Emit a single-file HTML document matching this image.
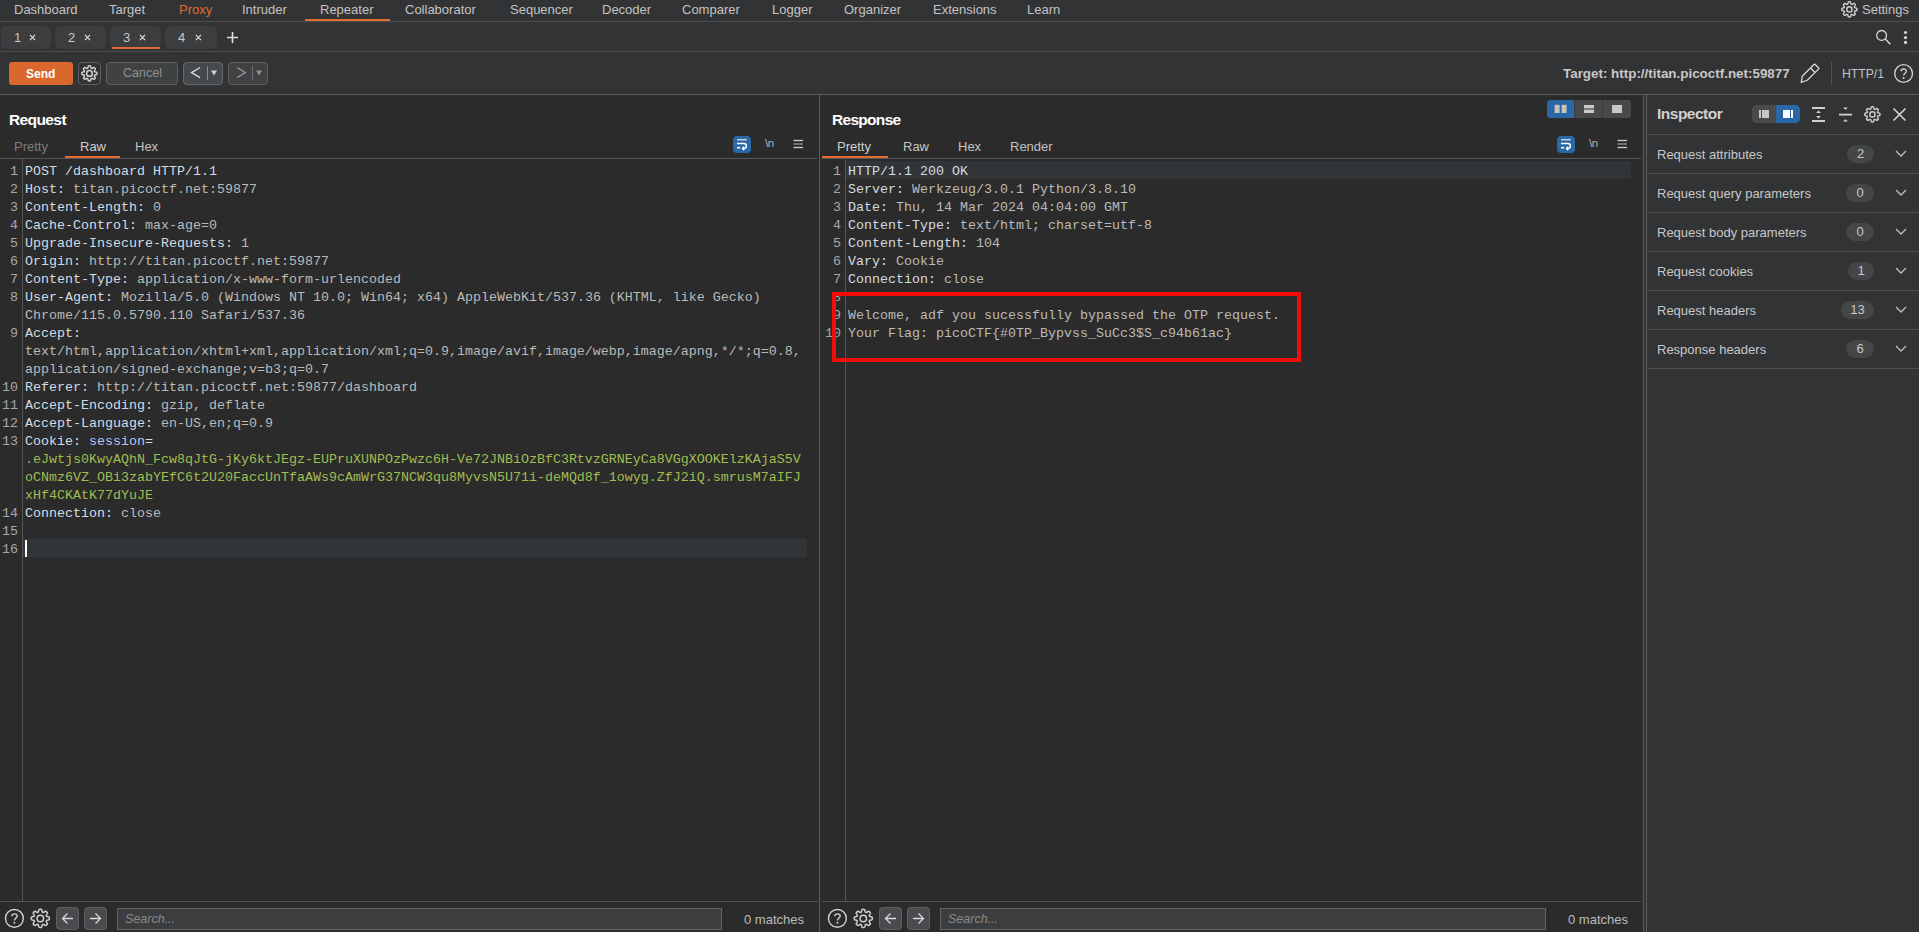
<!DOCTYPE html><html><head><meta charset="utf-8"><style>
html,body{margin:0;padding:0;}
body{width:1919px;height:932px;overflow:hidden;position:relative;background:#323335;font-family:"Liberation Sans",sans-serif;}
.a{position:absolute;}
.t{white-space:pre;}
svg{position:absolute;overflow:visible;}
</style></head><body>

<div class="a" style="left:0px;top:21px;width:1919px;height:1px;background:#4d4e50;"></div>
<div class="a t" style="left:14px;top:3px;font-size:13px;line-height:13px;color:#c3c3c3;font-weight:normal;font-family:'Liberation Sans', sans-serif;">Dashboard</div>
<div class="a t" style="left:109px;top:3px;font-size:13px;line-height:13px;color:#c3c3c3;font-weight:normal;font-family:'Liberation Sans', sans-serif;">Target</div>
<div class="a t" style="left:179px;top:3px;font-size:13px;line-height:13px;color:#e36a30;font-weight:normal;font-family:'Liberation Sans', sans-serif;">Proxy</div>
<div class="a t" style="left:242px;top:3px;font-size:13px;line-height:13px;color:#c3c3c3;font-weight:normal;font-family:'Liberation Sans', sans-serif;">Intruder</div>
<div class="a t" style="left:320px;top:3px;font-size:13px;line-height:13px;color:#c3c3c3;font-weight:normal;font-family:'Liberation Sans', sans-serif;">Repeater</div>
<div class="a t" style="left:405px;top:3px;font-size:13px;line-height:13px;color:#c3c3c3;font-weight:normal;font-family:'Liberation Sans', sans-serif;">Collaborator</div>
<div class="a t" style="left:510px;top:3px;font-size:13px;line-height:13px;color:#c3c3c3;font-weight:normal;font-family:'Liberation Sans', sans-serif;">Sequencer</div>
<div class="a t" style="left:602px;top:3px;font-size:13px;line-height:13px;color:#c3c3c3;font-weight:normal;font-family:'Liberation Sans', sans-serif;">Decoder</div>
<div class="a t" style="left:682px;top:3px;font-size:13px;line-height:13px;color:#c3c3c3;font-weight:normal;font-family:'Liberation Sans', sans-serif;">Comparer</div>
<div class="a t" style="left:772px;top:3px;font-size:13px;line-height:13px;color:#c3c3c3;font-weight:normal;font-family:'Liberation Sans', sans-serif;">Logger</div>
<div class="a t" style="left:844px;top:3px;font-size:13px;line-height:13px;color:#c3c3c3;font-weight:normal;font-family:'Liberation Sans', sans-serif;">Organizer</div>
<div class="a t" style="left:933px;top:3px;font-size:13px;line-height:13px;color:#c3c3c3;font-weight:normal;font-family:'Liberation Sans', sans-serif;">Extensions</div>
<div class="a t" style="left:1027px;top:3px;font-size:13px;line-height:13px;color:#c3c3c3;font-weight:normal;font-family:'Liberation Sans', sans-serif;">Learn</div>
<div class="a" style="left:305px;top:19px;width:85px;height:2px;background:#e36a30;"></div>
<div class="a t" style="left:1862px;top:3px;font-size:13px;line-height:13px;color:#c3c3c3;font-weight:normal;font-family:'Liberation Sans', sans-serif;">Settings</div>
<div class="a" style="left:0px;top:51px;width:1919px;height:1px;background:#4d4e50;"></div>
<div class="a" style="left:1px;top:26px;width:50px;height:23px;background:#3c3d3e;border-radius:5px;"></div>
<div class="a t" style="left:14px;top:31px;font-size:13px;line-height:13px;color:#c8c8c8;font-weight:normal;font-family:'Liberation Sans', sans-serif;">1</div>
<div class="a" style="left:55px;top:26px;width:51px;height:23px;background:#3c3d3e;border-radius:5px;"></div>
<div class="a t" style="left:68px;top:31px;font-size:13px;line-height:13px;color:#c8c8c8;font-weight:normal;font-family:'Liberation Sans', sans-serif;">2</div>
<div class="a" style="left:110px;top:26px;width:51px;height:23px;background:#3c3d3e;border-radius:5px;"></div>
<div class="a t" style="left:123px;top:31px;font-size:13px;line-height:13px;color:#c8c8c8;font-weight:normal;font-family:'Liberation Sans', sans-serif;">3</div>
<div class="a" style="left:165px;top:26px;width:52px;height:23px;background:#3c3d3e;border-radius:5px;"></div>
<div class="a t" style="left:178px;top:31px;font-size:13px;line-height:13px;color:#c8c8c8;font-weight:normal;font-family:'Liberation Sans', sans-serif;">4</div>
<div class="a" style="left:112px;top:47px;width:48px;height:2px;background:#e36a30;border-radius:0 0 1px 1px;"></div>
<div class="a" style="left:0px;top:94px;width:1919px;height:1px;background:#5c5c5c;"></div>
<div class="a" style="left:9px;top:62px;width:64px;height:23px;background:#d9672e;border-radius:3px;"></div>
<div class="a t" style="left:26px;top:68px;font-size:12px;line-height:12px;color:#ffffff;font-weight:bold;font-family:'Liberation Sans', sans-serif;">Send</div>
<div class="a" style="left:78px;top:62px;width:23px;height:23px;border:1px solid #5e5e5e;border-radius:4px;box-sizing:border-box;"></div>
<div class="a" style="left:106px;top:62px;width:72px;height:23px;background:#3f4143;border:1px solid #606060;border-radius:4px;box-sizing:border-box;"></div>
<div class="a t" style="left:123px;top:67px;font-size:12.5px;line-height:12.5px;color:#8e9193;font-weight:normal;font-family:'Liberation Sans', sans-serif;">Cancel</div>
<div class="a" style="left:183px;top:62px;width:40px;height:23px;background:#46494c;border:1px solid #676767;border-radius:4px;box-sizing:border-box;"></div>
<div class="a" style="left:228px;top:62px;width:40px;height:23px;background:#3f4143;border:1px solid #606060;border-radius:4px;box-sizing:border-box;"></div>
<div class="a t" style="left:1563px;top:67px;font-size:13.4px;line-height:13.4px;color:#c8c8c8;font-weight:bold;font-family:'Liberation Sans', sans-serif;">Target: http://titan.picoctf.net:59877</div>
<div class="a" style="left:1831px;top:62px;width:1px;height:23px;background:#505356;"></div>
<div class="a t" style="left:1842px;top:68px;font-size:12.2px;line-height:12.2px;color:#c3c3c3;font-weight:normal;font-family:'Liberation Sans', sans-serif;">HTTP/1</div>
<div class="a" style="left:0px;top:95px;width:819px;height:837px;background:#2b2b2b;"></div>
<div class="a" style="left:819px;top:95px;width:1px;height:837px;background:#5c5c5c;"></div>
<div class="a" style="left:820px;top:95px;width:823px;height:837px;background:#2b2b2b;"></div>
<div class="a" style="left:1643px;top:95px;width:1px;height:837px;background:#5c5c5c;"></div>
<div class="a" style="left:1646px;top:95px;width:1px;height:837px;background:#5c5c5c;"></div>
<div class="a t" style="left:9px;top:112px;font-size:15.5px;line-height:15.5px;color:#ffffff;font-weight:bold;font-family:'Liberation Sans', sans-serif;letter-spacing:-0.6px;">Request</div>
<div class="a t" style="left:14px;top:140px;font-size:13px;line-height:13px;color:#7d7d7d;font-weight:normal;font-family:'Liberation Sans', sans-serif;">Pretty</div>
<div class="a t" style="left:80px;top:140px;font-size:13px;line-height:13px;color:#d0d0d0;font-weight:normal;font-family:'Liberation Sans', sans-serif;">Raw</div>
<div class="a t" style="left:135px;top:140px;font-size:13px;line-height:13px;color:#c3c3c3;font-weight:normal;font-family:'Liberation Sans', sans-serif;">Hex</div>
<div class="a" style="left:65px;top:156px;width:55px;height:2px;background:#e36a30;"></div>
<div class="a" style="left:0px;top:158px;width:817px;height:1px;background:#555555;"></div>
<div class="a" style="left:22px;top:159px;width:1px;height:742px;background:#555555;"></div>
<div class="a t" style="left:832px;top:112px;font-size:15.5px;line-height:15.5px;color:#ffffff;font-weight:bold;font-family:'Liberation Sans', sans-serif;letter-spacing:-0.7px;">Response</div>
<div class="a t" style="left:837px;top:140px;font-size:13px;line-height:13px;color:#d0d0d0;font-weight:normal;font-family:'Liberation Sans', sans-serif;">Pretty</div>
<div class="a t" style="left:903px;top:140px;font-size:13px;line-height:13px;color:#c3c3c3;font-weight:normal;font-family:'Liberation Sans', sans-serif;">Raw</div>
<div class="a t" style="left:958px;top:140px;font-size:13px;line-height:13px;color:#c3c3c3;font-weight:normal;font-family:'Liberation Sans', sans-serif;">Hex</div>
<div class="a t" style="left:1010px;top:140px;font-size:13px;line-height:13px;color:#c3c3c3;font-weight:normal;font-family:'Liberation Sans', sans-serif;">Render</div>
<div class="a" style="left:822px;top:156px;width:66px;height:2px;background:#e36a30;"></div>
<div class="a" style="left:822px;top:158px;width:819px;height:1px;background:#555555;"></div>
<div class="a" style="left:845px;top:159px;width:1px;height:742px;background:#555555;"></div>
<div class="a" style="left:0px;top:901px;width:817px;height:1px;background:#555555;"></div>
<div class="a" style="left:822px;top:901px;width:819px;height:1px;background:#555555;"></div>
<div class="a" style="left:117px;top:908px;width:605px;height:22px;background:#3c3d3f;border:1px solid #646464;box-sizing:border-box;"></div>
<div class="a t" style="left:125px;top:913px;font-size:12.5px;line-height:12.5px;color:#8a8a8a;font-weight:normal;font-family:'Liberation Sans', sans-serif;font-style:italic;">Search...</div>
<div class="a t" style="left:744px;top:913px;font-size:13px;line-height:13px;color:#bdbdbd;font-weight:normal;font-family:'Liberation Sans', sans-serif;">0 matches</div>
<div class="a" style="left:940px;top:908px;width:606px;height:22px;background:#3c3d3f;border:1px solid #646464;box-sizing:border-box;"></div>
<div class="a t" style="left:948px;top:913px;font-size:12.5px;line-height:12.5px;color:#8a8a8a;font-weight:normal;font-family:'Liberation Sans', sans-serif;font-style:italic;">Search...</div>
<div class="a t" style="left:1568px;top:913px;font-size:13px;line-height:13px;color:#bdbdbd;font-weight:normal;font-family:'Liberation Sans', sans-serif;">0 matches</div>
<div class="a" style="left:56px;top:907px;width:23px;height:23px;background:#45494c;border-radius:4px;"></div>
<div class="a" style="left:84px;top:907px;width:23px;height:23px;background:#45494c;border-radius:4px;"></div>
<div class="a" style="left:879px;top:907px;width:23px;height:23px;background:#45494c;border-radius:4px;"></div>
<div class="a" style="left:907px;top:907px;width:23px;height:23px;background:#45494c;border-radius:4px;"></div>
<div class="a" style="left:1647px;top:95px;width:272px;height:837px;background:#323335;"></div>
<div class="a t" style="left:1657px;top:106px;font-size:15.5px;line-height:15.5px;color:#d0d0d0;font-weight:bold;font-family:'Liberation Sans', sans-serif;letter-spacing:-0.5px;">Inspector</div>
<div class="a" style="left:1647px;top:134px;width:272px;height:1px;background:#4d4e50;"></div>
<div class="a t" style="left:1657px;top:148px;font-size:13px;line-height:13px;color:#c8c8c8;font-weight:normal;font-family:'Liberation Sans', sans-serif;">Request attributes</div>
<div class="a" style="left:1847px;top:145px;width:27px;height:18px;background:#454647;border-radius:9px;"></div>
<div class="a t" style="left:1847px;top:147px;font-size:13px;line-height:13px;color:#c8c8c8;font-weight:normal;font-family:'Liberation Sans', sans-serif;width:27px;text-align:center;">2</div>
<div class="a" style="left:1647px;top:173px;width:272px;height:1px;background:#4d4e50;"></div>
<div class="a t" style="left:1657px;top:187px;font-size:13px;line-height:13px;color:#c8c8c8;font-weight:normal;font-family:'Liberation Sans', sans-serif;">Request query parameters</div>
<div class="a" style="left:1846px;top:184px;width:28px;height:18px;background:#454647;border-radius:9px;"></div>
<div class="a t" style="left:1846px;top:186px;font-size:13px;line-height:13px;color:#c8c8c8;font-weight:normal;font-family:'Liberation Sans', sans-serif;width:28px;text-align:center;">0</div>
<div class="a" style="left:1647px;top:212px;width:272px;height:1px;background:#4d4e50;"></div>
<div class="a t" style="left:1657px;top:226px;font-size:13px;line-height:13px;color:#c8c8c8;font-weight:normal;font-family:'Liberation Sans', sans-serif;">Request body parameters</div>
<div class="a" style="left:1846px;top:223px;width:28px;height:18px;background:#454647;border-radius:9px;"></div>
<div class="a t" style="left:1846px;top:225px;font-size:13px;line-height:13px;color:#c8c8c8;font-weight:normal;font-family:'Liberation Sans', sans-serif;width:28px;text-align:center;">0</div>
<div class="a" style="left:1647px;top:251px;width:272px;height:1px;background:#4d4e50;"></div>
<div class="a t" style="left:1657px;top:265px;font-size:13px;line-height:13px;color:#c8c8c8;font-weight:normal;font-family:'Liberation Sans', sans-serif;">Request cookies</div>
<div class="a" style="left:1848px;top:262px;width:26px;height:18px;background:#454647;border-radius:9px;"></div>
<div class="a t" style="left:1848px;top:264px;font-size:13px;line-height:13px;color:#c8c8c8;font-weight:normal;font-family:'Liberation Sans', sans-serif;width:26px;text-align:center;">1</div>
<div class="a" style="left:1647px;top:290px;width:272px;height:1px;background:#4d4e50;"></div>
<div class="a t" style="left:1657px;top:304px;font-size:13px;line-height:13px;color:#c8c8c8;font-weight:normal;font-family:'Liberation Sans', sans-serif;">Request headers</div>
<div class="a" style="left:1841px;top:301px;width:33px;height:18px;background:#454647;border-radius:9px;"></div>
<div class="a t" style="left:1841px;top:303px;font-size:13px;line-height:13px;color:#c8c8c8;font-weight:normal;font-family:'Liberation Sans', sans-serif;width:33px;text-align:center;">13</div>
<div class="a" style="left:1647px;top:329px;width:272px;height:1px;background:#4d4e50;"></div>
<div class="a t" style="left:1657px;top:343px;font-size:13px;line-height:13px;color:#c8c8c8;font-weight:normal;font-family:'Liberation Sans', sans-serif;">Response headers</div>
<div class="a" style="left:1846px;top:340px;width:28px;height:18px;background:#454647;border-radius:9px;"></div>
<div class="a t" style="left:1846px;top:342px;font-size:13px;line-height:13px;color:#c8c8c8;font-weight:normal;font-family:'Liberation Sans', sans-serif;width:28px;text-align:center;">6</div>
<div class="a" style="left:1647px;top:368px;width:272px;height:1px;background:#4d4e50;"></div>
<div class="a" style="left:23px;top:539px;width:784px;height:18px;background:#323538;"></div>
<div class="a" style="left:846px;top:161px;width:785px;height:18px;background:#323538;"></div>
<div class="a" style="left:25px;top:540px;width:2px;height:17px;background:#ffffff;"></div>
<div class="a t" style="left:0px;width:18px;top:163px;text-align:right;font:13.33px/18px 'Liberation Mono',monospace;color:#a8a8a8">1
2
3
4
5
6
7
8

9


10
11
12
13



14
15
16</div>
<div class="a t" style="left:25px;top:163px;font:13.33px/18px 'Liberation Mono',monospace;"><span style="color:#d2dce5">POST /dashboard HTTP/1.1</span>
<span style="color:#d2dce5">Host:</span><span style="color:#bababa"> titan.picoctf.net:59877</span>
<span style="color:#d2dce5">Content-Length:</span><span style="color:#bababa"> 0</span>
<span style="color:#d2dce5">Cache-Control:</span><span style="color:#bababa"> max-age=0</span>
<span style="color:#d2dce5">Upgrade-Insecure-Requests:</span><span style="color:#bababa"> 1</span>
<span style="color:#d2dce5">Origin:</span><span style="color:#bababa"> http://titan.picoctf.net:59877</span>
<span style="color:#d2dce5">Content-Type:</span><span style="color:#bababa"> application/x-www-form-urlencoded</span>
<span style="color:#d2dce5">User-Agent:</span><span style="color:#bababa"> Mozilla/5.0 (Windows NT 10.0; Win64; x64) AppleWebKit/537.36 (KHTML, like Gecko)</span>
<span style="color:#bababa">Chrome/115.0.5790.110 Safari/537.36</span>
<span style="color:#d2dce5">Accept:</span>
<span style="color:#bababa">text/html,application/xhtml+xml,application/xml;q=0.9,image/avif,image/webp,image/apng,*/*;q=0.8,</span>
<span style="color:#bababa">application/signed-exchange;v=b3;q=0.7</span>
<span style="color:#d2dce5">Referer:</span><span style="color:#bababa"> http://titan.picoctf.net:59877/dashboard</span>
<span style="color:#d2dce5">Accept-Encoding:</span><span style="color:#bababa"> gzip, deflate</span>
<span style="color:#d2dce5">Accept-Language:</span><span style="color:#bababa"> en-US,en;q=0.9</span>
<span style="color:#d2dce5">Cookie:</span><span style="color:#b9c3f2"> session</span><span style="color:#d2dce5">=</span>
<span style="color:#a0bd52">.eJwtjs0KwyAQhN_Fcw8qJtG-jKy6ktJEgz-EUPruXUNPOzPwzc6H-Ve72JNBiOzBfC3RtvzGRNEyCa8VGgXOOKElzKAjaS5V</span>
<span style="color:#a0bd52">oCNmz6VZ_OBi3zabYEfC6t2U20FaccUnTfaAWs9cAmWrG37NCW3qu8MyvsN5U71i-deMQd8f_1owyg.ZfJ2iQ.smrusM7aIFJ</span>
<span style="color:#a0bd52">xHf4CKAtK77dYuJE</span>
<span style="color:#d2dce5">Connection:</span><span style="color:#bababa"> close</span>

</div>
<div class="a t" style="left:0px;width:841px;top:163px;text-align:right;font:13.33px/18px 'Liberation Mono',monospace;color:#a8a8a8">1
2
3
4
5
6
7
8
9
10</div>
<div class="a t" style="left:848px;top:163px;font:13.33px/18px 'Liberation Mono',monospace;"><span style="color:#d2dce5">HTTP/1.1 200 OK</span>
<span style="color:#d2dce5">Server:</span><span style="color:#bababa"> Werkzeug/3.0.1 Python/3.8.10</span>
<span style="color:#d2dce5">Date:</span><span style="color:#bababa"> Thu, 14 Mar 2024 04:04:00 GMT</span>
<span style="color:#d2dce5">Content-Type:</span><span style="color:#bababa"> text/html; charset=utf-8</span>
<span style="color:#d2dce5">Content-Length:</span><span style="color:#bababa"> 104</span>
<span style="color:#d2dce5">Vary:</span><span style="color:#bababa"> Cookie</span>
<span style="color:#d2dce5">Connection:</span><span style="color:#bababa"> close</span>

<span style="color:#bababa">Welcome, adf you sucessfully bypassed the OTP request.</span>
<span style="color:#bababa">Your Flag: picoCTF{#0TP_Bypvss_SuCc3$S_c94b61ac}</span></div>
<div class="a" style="left:832px;top:292px;width:469px;height:70px;border:4px solid #f20d0d;box-sizing:border-box;"></div>
<svg style="left:1839px;top:0px" width="20" height="20" viewBox="0 0 20 20"><path d="M18.00,9.40 L18.00,9.27 L18.00,9.13 L17.99,9.00 L17.98,8.87 L17.95,8.74 L17.91,8.61 L17.84,8.49 L17.74,8.37 L17.60,8.26 L17.41,8.16 L17.16,8.09 L16.87,8.02 L16.57,7.98 L16.30,7.93 L16.08,7.88 L15.92,7.82 L15.79,7.75 L15.70,7.68 L15.63,7.60 L15.57,7.52 L15.53,7.43 L15.48,7.35 L15.45,7.26 L15.42,7.17 L15.39,7.07 L15.37,6.97 L15.37,6.87 L15.38,6.75 L15.42,6.62 L15.50,6.46 L15.61,6.27 L15.77,6.04 L15.95,5.80 L16.11,5.55 L16.23,5.32 L16.30,5.11 L16.32,4.94 L16.31,4.78 L16.27,4.65 L16.21,4.53 L16.14,4.41 L16.05,4.31 L15.96,4.22 L15.87,4.12 L15.77,4.03 L15.68,3.93 L15.58,3.84 L15.49,3.75 L15.39,3.66 L15.27,3.59 L15.15,3.53 L15.02,3.49 L14.86,3.48 L14.69,3.50 L14.48,3.57 L14.25,3.69 L14.00,3.85 L13.76,4.03 L13.53,4.19 L13.34,4.30 L13.18,4.38 L13.05,4.42 L12.93,4.43 L12.83,4.43 L12.73,4.41 L12.63,4.38 L12.54,4.35 L12.45,4.32 L12.37,4.27 L12.28,4.23 L12.20,4.17 L12.12,4.10 L12.05,4.01 L11.98,3.88 L11.92,3.72 L11.87,3.50 L11.82,3.23 L11.78,2.93 L11.71,2.64 L11.64,2.39 L11.54,2.20 L11.43,2.06 L11.31,1.96 L11.19,1.89 L11.06,1.85 L10.93,1.82 L10.80,1.81 L10.67,1.80 L10.53,1.80 L10.40,1.80 L10.27,1.80 L10.13,1.80 L10.00,1.81 L9.87,1.82 L9.74,1.85 L9.61,1.89 L9.49,1.96 L9.37,2.06 L9.26,2.20 L9.16,2.39 L9.09,2.64 L9.02,2.93 L8.98,3.23 L8.93,3.50 L8.88,3.72 L8.82,3.88 L8.75,4.01 L8.68,4.10 L8.60,4.17 L8.52,4.23 L8.43,4.27 L8.35,4.32 L8.26,4.35 L8.17,4.38 L8.07,4.41 L7.97,4.43 L7.87,4.43 L7.75,4.42 L7.62,4.38 L7.46,4.30 L7.27,4.19 L7.04,4.03 L6.80,3.85 L6.55,3.69 L6.32,3.57 L6.11,3.50 L5.94,3.48 L5.78,3.49 L5.65,3.53 L5.53,3.59 L5.41,3.66 L5.31,3.75 L5.22,3.84 L5.12,3.93 L5.03,4.03 L4.93,4.12 L4.84,4.22 L4.75,4.31 L4.66,4.41 L4.59,4.53 L4.53,4.65 L4.49,4.78 L4.48,4.94 L4.50,5.11 L4.57,5.32 L4.69,5.55 L4.85,5.80 L5.03,6.04 L5.19,6.27 L5.30,6.46 L5.38,6.62 L5.42,6.75 L5.43,6.87 L5.43,6.97 L5.41,7.07 L5.38,7.17 L5.35,7.26 L5.32,7.35 L5.27,7.43 L5.23,7.52 L5.17,7.60 L5.10,7.68 L5.01,7.75 L4.88,7.82 L4.72,7.88 L4.50,7.93 L4.23,7.98 L3.93,8.02 L3.64,8.09 L3.39,8.16 L3.20,8.26 L3.06,8.37 L2.96,8.49 L2.89,8.61 L2.85,8.74 L2.82,8.87 L2.81,9.00 L2.80,9.13 L2.80,9.27 L2.80,9.40 L2.80,9.53 L2.80,9.67 L2.81,9.80 L2.82,9.93 L2.85,10.06 L2.89,10.19 L2.96,10.31 L3.06,10.43 L3.20,10.54 L3.39,10.64 L3.64,10.71 L3.93,10.78 L4.23,10.82 L4.50,10.87 L4.72,10.92 L4.88,10.98 L5.01,11.05 L5.10,11.12 L5.17,11.20 L5.23,11.28 L5.27,11.37 L5.32,11.45 L5.35,11.54 L5.38,11.63 L5.41,11.73 L5.43,11.83 L5.43,11.93 L5.42,12.05 L5.38,12.18 L5.30,12.34 L5.19,12.53 L5.03,12.76 L4.85,13.00 L4.69,13.25 L4.57,13.48 L4.50,13.69 L4.48,13.86 L4.49,14.02 L4.53,14.15 L4.59,14.27 L4.66,14.39 L4.75,14.49 L4.84,14.58 L4.93,14.68 L5.03,14.77 L5.12,14.87 L5.22,14.96 L5.31,15.05 L5.41,15.14 L5.53,15.21 L5.65,15.27 L5.78,15.31 L5.94,15.32 L6.11,15.30 L6.32,15.23 L6.55,15.11 L6.80,14.95 L7.04,14.77 L7.27,14.61 L7.46,14.50 L7.62,14.42 L7.75,14.38 L7.87,14.37 L7.97,14.37 L8.07,14.39 L8.17,14.42 L8.26,14.45 L8.35,14.48 L8.43,14.53 L8.52,14.57 L8.60,14.63 L8.68,14.70 L8.75,14.79 L8.82,14.92 L8.88,15.08 L8.93,15.30 L8.98,15.57 L9.02,15.87 L9.09,16.16 L9.16,16.41 L9.26,16.60 L9.37,16.74 L9.49,16.84 L9.61,16.91 L9.74,16.95 L9.87,16.98 L10.00,16.99 L10.13,17.00 L10.27,17.00 L10.40,17.00 L10.53,17.00 L10.67,17.00 L10.80,16.99 L10.93,16.98 L11.06,16.95 L11.19,16.91 L11.31,16.84 L11.43,16.74 L11.54,16.60 L11.64,16.41 L11.71,16.16 L11.78,15.87 L11.82,15.57 L11.87,15.30 L11.92,15.08 L11.98,14.92 L12.05,14.79 L12.12,14.70 L12.20,14.63 L12.28,14.57 L12.37,14.53 L12.45,14.48 L12.54,14.45 L12.63,14.42 L12.73,14.39 L12.83,14.37 L12.93,14.37 L13.05,14.38 L13.18,14.42 L13.34,14.50 L13.53,14.61 L13.76,14.77 L14.00,14.95 L14.25,15.11 L14.48,15.23 L14.69,15.30 L14.86,15.32 L15.02,15.31 L15.15,15.27 L15.27,15.21 L15.39,15.14 L15.49,15.05 L15.58,14.96 L15.68,14.87 L15.77,14.77 L15.87,14.68 L15.96,14.58 L16.05,14.49 L16.14,14.39 L16.21,14.27 L16.27,14.15 L16.31,14.02 L16.32,13.86 L16.30,13.69 L16.23,13.48 L16.11,13.25 L15.95,13.00 L15.77,12.76 L15.61,12.53 L15.50,12.34 L15.42,12.18 L15.38,12.05 L15.37,11.93 L15.37,11.83 L15.39,11.73 L15.42,11.63 L15.45,11.54 L15.48,11.45 L15.53,11.37 L15.57,11.28 L15.63,11.20 L15.70,11.12 L15.79,11.05 L15.92,10.98 L16.08,10.92 L16.30,10.87 L16.57,10.82 L16.87,10.78 L17.16,10.71 L17.41,10.64 L17.60,10.54 L17.74,10.43 L17.84,10.31 L17.91,10.19 L17.95,10.06 L17.98,9.93 L17.99,9.80 L18.00,9.67 L18.00,9.53Z" fill="none" stroke="#d0d0d0" stroke-width="1.4" stroke-linejoin="round"/><circle cx="10.40" cy="9.40" r="2.60" fill="none" stroke="#d0d0d0" stroke-width="1.4"/></svg>
<svg style="left:79px;top:63px" width="20" height="20" viewBox="0 0 20 20"><path d="M17.95,10.40 L17.95,10.27 L17.95,10.14 L17.94,10.00 L17.93,9.87 L17.90,9.74 L17.86,9.62 L17.79,9.49 L17.69,9.37 L17.55,9.27 L17.36,9.17 L17.11,9.10 L16.82,9.04 L16.52,8.99 L16.25,8.94 L16.04,8.89 L15.87,8.83 L15.75,8.77 L15.66,8.69 L15.58,8.61 L15.53,8.53 L15.48,8.45 L15.44,8.36 L15.40,8.28 L15.37,8.19 L15.35,8.09 L15.33,8.00 L15.32,7.89 L15.34,7.77 L15.38,7.64 L15.45,7.48 L15.57,7.29 L15.73,7.07 L15.91,6.82 L16.07,6.58 L16.19,6.35 L16.26,6.14 L16.28,5.97 L16.27,5.82 L16.23,5.68 L16.17,5.56 L16.10,5.45 L16.01,5.35 L15.92,5.25 L15.83,5.16 L15.74,5.06 L15.64,4.97 L15.55,4.88 L15.45,4.79 L15.35,4.70 L15.24,4.63 L15.12,4.57 L14.98,4.53 L14.83,4.52 L14.66,4.54 L14.45,4.61 L14.22,4.73 L13.98,4.89 L13.73,5.07 L13.51,5.23 L13.32,5.35 L13.16,5.42 L13.03,5.46 L12.91,5.48 L12.80,5.47 L12.71,5.45 L12.61,5.43 L12.52,5.40 L12.44,5.36 L12.35,5.32 L12.27,5.27 L12.19,5.22 L12.11,5.14 L12.03,5.05 L11.97,4.93 L11.91,4.76 L11.86,4.55 L11.81,4.28 L11.76,3.98 L11.70,3.69 L11.63,3.44 L11.53,3.25 L11.43,3.11 L11.31,3.01 L11.18,2.94 L11.06,2.90 L10.93,2.87 L10.80,2.86 L10.66,2.85 L10.53,2.85 L10.40,2.85 L10.27,2.85 L10.14,2.85 L10.00,2.86 L9.87,2.87 L9.74,2.90 L9.62,2.94 L9.49,3.01 L9.37,3.11 L9.27,3.25 L9.17,3.44 L9.10,3.69 L9.04,3.98 L8.99,4.28 L8.94,4.55 L8.89,4.76 L8.83,4.93 L8.77,5.05 L8.69,5.14 L8.61,5.22 L8.53,5.27 L8.45,5.32 L8.36,5.36 L8.28,5.40 L8.19,5.43 L8.09,5.45 L8.00,5.47 L7.89,5.48 L7.77,5.46 L7.64,5.42 L7.48,5.35 L7.29,5.23 L7.07,5.07 L6.82,4.89 L6.58,4.73 L6.35,4.61 L6.14,4.54 L5.97,4.52 L5.82,4.53 L5.68,4.57 L5.56,4.63 L5.45,4.70 L5.35,4.79 L5.25,4.88 L5.16,4.97 L5.06,5.06 L4.97,5.16 L4.88,5.25 L4.79,5.35 L4.70,5.45 L4.63,5.56 L4.57,5.68 L4.53,5.82 L4.52,5.97 L4.54,6.14 L4.61,6.35 L4.73,6.58 L4.89,6.82 L5.07,7.07 L5.23,7.29 L5.35,7.48 L5.42,7.64 L5.46,7.77 L5.48,7.89 L5.47,8.00 L5.45,8.09 L5.43,8.19 L5.40,8.28 L5.36,8.36 L5.32,8.45 L5.27,8.53 L5.22,8.61 L5.14,8.69 L5.05,8.77 L4.93,8.83 L4.76,8.89 L4.55,8.94 L4.28,8.99 L3.98,9.04 L3.69,9.10 L3.44,9.17 L3.25,9.27 L3.11,9.37 L3.01,9.49 L2.94,9.62 L2.90,9.74 L2.87,9.87 L2.86,10.00 L2.85,10.14 L2.85,10.27 L2.85,10.40 L2.85,10.53 L2.85,10.66 L2.86,10.80 L2.87,10.93 L2.90,11.06 L2.94,11.18 L3.01,11.31 L3.11,11.43 L3.25,11.53 L3.44,11.63 L3.69,11.70 L3.98,11.76 L4.28,11.81 L4.55,11.86 L4.76,11.91 L4.93,11.97 L5.05,12.03 L5.14,12.11 L5.22,12.19 L5.27,12.27 L5.32,12.35 L5.36,12.44 L5.40,12.52 L5.43,12.61 L5.45,12.71 L5.47,12.80 L5.48,12.91 L5.46,13.03 L5.42,13.16 L5.35,13.32 L5.23,13.51 L5.07,13.73 L4.89,13.98 L4.73,14.22 L4.61,14.45 L4.54,14.66 L4.52,14.83 L4.53,14.98 L4.57,15.12 L4.63,15.24 L4.70,15.35 L4.79,15.45 L4.88,15.55 L4.97,15.64 L5.06,15.74 L5.16,15.83 L5.25,15.92 L5.35,16.01 L5.45,16.10 L5.56,16.17 L5.68,16.23 L5.82,16.27 L5.97,16.28 L6.14,16.26 L6.35,16.19 L6.58,16.07 L6.82,15.91 L7.07,15.73 L7.29,15.57 L7.48,15.45 L7.64,15.38 L7.77,15.34 L7.89,15.32 L8.00,15.33 L8.09,15.35 L8.19,15.37 L8.28,15.40 L8.36,15.44 L8.45,15.48 L8.53,15.53 L8.61,15.58 L8.69,15.66 L8.77,15.75 L8.83,15.87 L8.89,16.04 L8.94,16.25 L8.99,16.52 L9.04,16.82 L9.10,17.11 L9.17,17.36 L9.27,17.55 L9.37,17.69 L9.49,17.79 L9.62,17.86 L9.74,17.90 L9.87,17.93 L10.00,17.94 L10.14,17.95 L10.27,17.95 L10.40,17.95 L10.53,17.95 L10.66,17.95 L10.80,17.94 L10.93,17.93 L11.06,17.90 L11.18,17.86 L11.31,17.79 L11.43,17.69 L11.53,17.55 L11.63,17.36 L11.70,17.11 L11.76,16.82 L11.81,16.52 L11.86,16.25 L11.91,16.04 L11.97,15.87 L12.03,15.75 L12.11,15.66 L12.19,15.58 L12.27,15.53 L12.35,15.48 L12.44,15.44 L12.52,15.40 L12.61,15.37 L12.71,15.35 L12.80,15.33 L12.91,15.32 L13.03,15.34 L13.16,15.38 L13.32,15.45 L13.51,15.57 L13.73,15.73 L13.98,15.91 L14.22,16.07 L14.45,16.19 L14.66,16.26 L14.83,16.28 L14.98,16.27 L15.12,16.23 L15.24,16.17 L15.35,16.10 L15.45,16.01 L15.55,15.92 L15.64,15.83 L15.74,15.74 L15.83,15.64 L15.92,15.55 L16.01,15.45 L16.10,15.35 L16.17,15.24 L16.23,15.12 L16.27,14.98 L16.28,14.83 L16.26,14.66 L16.19,14.45 L16.07,14.22 L15.91,13.98 L15.73,13.73 L15.57,13.51 L15.45,13.32 L15.38,13.16 L15.34,13.03 L15.32,12.91 L15.33,12.80 L15.35,12.71 L15.37,12.61 L15.40,12.52 L15.44,12.44 L15.48,12.35 L15.53,12.27 L15.58,12.19 L15.66,12.11 L15.75,12.03 L15.87,11.97 L16.04,11.91 L16.25,11.86 L16.52,11.81 L16.82,11.76 L17.11,11.70 L17.36,11.63 L17.55,11.53 L17.69,11.43 L17.79,11.31 L17.86,11.18 L17.90,11.06 L17.93,10.93 L17.94,10.80 L17.95,10.66 L17.95,10.53Z" fill="none" stroke="#d0d0d0" stroke-width="1.5" stroke-linejoin="round"/><circle cx="10.40" cy="10.40" r="2.85" fill="none" stroke="#d0d0d0" stroke-width="1.5"/></svg>
<svg style="left:28px;top:33px" width="9" height="9" viewBox="0 0 9 9"><path d="M1.90,1.9 L7.10,7.1 M7.10,1.9 L1.90,7.1" stroke="#e4e4e4" stroke-width="1.1"/></svg>
<svg style="left:83px;top:33px" width="9" height="9" viewBox="0 0 9 9"><path d="M1.90,1.9 L7.10,7.1 M7.10,1.9 L1.90,7.1" stroke="#e4e4e4" stroke-width="1.1"/></svg>
<svg style="left:138px;top:33px" width="9" height="9" viewBox="0 0 9 9"><path d="M1.90,1.9 L7.10,7.1 M7.10,1.9 L1.90,7.1" stroke="#e4e4e4" stroke-width="1.1"/></svg>
<svg style="left:194px;top:33px" width="9" height="9" viewBox="0 0 9 9"><path d="M1.80,1.9 L7.00,7.1 M7.00,1.9 L1.80,7.1" stroke="#e4e4e4" stroke-width="1.1"/></svg>
<svg style="left:226px;top:31px" width="13" height="13" viewBox="0 0 13 13"><path d="M6.5,1 V12 M1,6.5 H12" stroke="#e0e0e0" stroke-width="1.6"/></svg>
<svg style="left:1874px;top:28px" width="20" height="20" viewBox="0 0 20 20"><circle cx="7.6" cy="7.4" r="4.9" fill="none" stroke="#d8d8d8" stroke-width="1.3"/><path d="M11.2,11 L16.4,16.2" stroke="#d8d8d8" stroke-width="1.4"/></svg>
<svg style="left:1901px;top:29px" width="9" height="17" viewBox="0 0 9 17"><circle cx="4.5" cy="3.5" r="1.6" fill="#d8d8d8"/><circle cx="4.5" cy="8.6" r="1.6" fill="#d8d8d8"/><circle cx="4.5" cy="13.4" r="1.6" fill="#d8d8d8"/></svg>
<svg style="left:183px;top:62px" width="40" height="23" viewBox="0 0 40 23"><path d="M17,5.5 L8.6,10.6 L17,15.7" fill="none" stroke="#d8d8d8" stroke-width="1.4"/><path d="M24.5,4 V18" stroke="#8a8d90" stroke-width="1"/><path d="M28,8.5 H34 L31,13.5 Z" fill="#d0d0d0"/></svg>
<svg style="left:228px;top:62px" width="40" height="23" viewBox="0 0 40 23"><path d="M9,5.5 L17.4,10.6 L9,15.7" fill="none" stroke="#8e9194" stroke-width="1.4"/><path d="M24.5,4 V18" stroke="#6a6d70" stroke-width="1"/><path d="M28,8.5 H34 L31,13.5 Z" fill="#8e9194"/></svg>
<svg style="left:1799px;top:62px" width="24" height="24" viewBox="0 0 24 24"><path d="M3.25,14.25 L15.2,2.3 Q15.6,1.9 16,2.3 L19.7,6 Q20.1,6.5 19.7,6.9 L8.25,18.25 L2.2,20.3 Z" fill="none" stroke="#d8d8d8" stroke-width="1.3" stroke-linejoin="round"/><path d="M11.55,5.95 L16.05,10.45" stroke="#d8d8d8" stroke-width="1.3"/></svg>
<svg style="left:1892px;top:61px" width="23" height="23" viewBox="0 0 23 23"><circle cx="11.60" cy="12.50" r="8.90" fill="none" stroke="#d0d0d0" stroke-width="1.4"/><path d="M9.00,10.30 C9.00,7.30 14.40,7.30 14.40,10.10 C14.40,12.10 11.60,12.30 11.60,14.50" fill="none" stroke="#d0d0d0" stroke-width="1.4"/><circle cx="11.60" cy="16.90" r="1.00" fill="#d0d0d0"/></svg>
<svg style="left:2px;top:906px" width="23" height="23" viewBox="0 0 23 23"><circle cx="12.40" cy="12.40" r="8.90" fill="none" stroke="#d0d0d0" stroke-width="1.4"/><path d="M9.80,10.20 C9.80,7.20 15.20,7.20 15.20,10.00 C15.20,12.00 12.40,12.20 12.40,14.40" fill="none" stroke="#d0d0d0" stroke-width="1.4"/><circle cx="12.40" cy="16.80" r="1.00" fill="#d0d0d0"/></svg>
<svg style="left:28px;top:906px" width="23" height="23" viewBox="0 0 23 23"><path d="M21.35,12.40 L21.35,12.24 L21.34,12.08 L21.34,11.93 L21.33,11.77 L21.31,11.61 L21.25,11.46 L21.18,11.31 L21.07,11.17 L20.91,11.04 L20.70,10.92 L20.43,10.82 L20.10,10.74 L19.76,10.68 L19.43,10.62 L19.16,10.56 L18.94,10.50 L18.77,10.42 L18.64,10.34 L18.55,10.25 L18.47,10.15 L18.41,10.05 L18.36,9.95 L18.31,9.85 L18.28,9.74 L18.25,9.62 L18.24,9.50 L18.24,9.37 L18.27,9.22 L18.34,9.05 L18.45,8.85 L18.60,8.61 L18.79,8.35 L18.99,8.06 L19.16,7.77 L19.29,7.51 L19.36,7.27 L19.37,7.07 L19.35,6.89 L19.30,6.73 L19.22,6.59 L19.13,6.46 L19.03,6.34 L18.92,6.23 L18.81,6.11 L18.70,6.00 L18.59,5.89 L18.47,5.78 L18.36,5.67 L18.24,5.57 L18.11,5.48 L17.97,5.40 L17.81,5.35 L17.63,5.33 L17.43,5.34 L17.19,5.41 L16.93,5.54 L16.64,5.71 L16.35,5.91 L16.09,6.10 L15.85,6.25 L15.65,6.36 L15.48,6.43 L15.33,6.46 L15.20,6.46 L15.08,6.45 L14.96,6.42 L14.85,6.39 L14.75,6.34 L14.65,6.29 L14.55,6.23 L14.45,6.15 L14.36,6.06 L14.28,5.93 L14.20,5.76 L14.14,5.54 L14.08,5.27 L14.02,4.94 L13.96,4.60 L13.88,4.27 L13.78,4.00 L13.66,3.79 L13.53,3.63 L13.39,3.52 L13.24,3.45 L13.09,3.39 L12.93,3.37 L12.77,3.36 L12.62,3.36 L12.46,3.35 L12.30,3.35 L12.14,3.35 L11.98,3.36 L11.83,3.36 L11.67,3.37 L11.51,3.39 L11.36,3.45 L11.21,3.52 L11.07,3.63 L10.94,3.79 L10.82,4.00 L10.72,4.27 L10.64,4.60 L10.58,4.94 L10.52,5.27 L10.46,5.54 L10.40,5.76 L10.32,5.93 L10.24,6.06 L10.15,6.15 L10.05,6.23 L9.95,6.29 L9.85,6.34 L9.75,6.39 L9.64,6.42 L9.52,6.45 L9.40,6.46 L9.27,6.46 L9.12,6.43 L8.95,6.36 L8.75,6.25 L8.51,6.10 L8.25,5.91 L7.96,5.71 L7.67,5.54 L7.41,5.41 L7.17,5.34 L6.97,5.33 L6.79,5.35 L6.63,5.40 L6.49,5.48 L6.36,5.57 L6.24,5.67 L6.13,5.78 L6.01,5.89 L5.90,6.00 L5.79,6.11 L5.68,6.23 L5.57,6.34 L5.47,6.46 L5.38,6.59 L5.30,6.73 L5.25,6.89 L5.23,7.07 L5.24,7.27 L5.31,7.51 L5.44,7.77 L5.61,8.06 L5.81,8.35 L6.00,8.61 L6.15,8.85 L6.26,9.05 L6.33,9.22 L6.36,9.37 L6.36,9.50 L6.35,9.62 L6.32,9.74 L6.29,9.85 L6.24,9.95 L6.19,10.05 L6.13,10.15 L6.05,10.25 L5.96,10.34 L5.83,10.42 L5.66,10.50 L5.44,10.56 L5.17,10.62 L4.84,10.68 L4.50,10.74 L4.17,10.82 L3.90,10.92 L3.69,11.04 L3.53,11.17 L3.42,11.31 L3.35,11.46 L3.29,11.61 L3.27,11.77 L3.26,11.93 L3.26,12.08 L3.25,12.24 L3.25,12.40 L3.25,12.56 L3.26,12.72 L3.26,12.87 L3.27,13.03 L3.29,13.19 L3.35,13.34 L3.42,13.49 L3.53,13.63 L3.69,13.76 L3.90,13.88 L4.17,13.98 L4.50,14.06 L4.84,14.12 L5.17,14.18 L5.44,14.24 L5.66,14.30 L5.83,14.38 L5.96,14.46 L6.05,14.55 L6.13,14.65 L6.19,14.75 L6.24,14.85 L6.29,14.95 L6.32,15.06 L6.35,15.18 L6.36,15.30 L6.36,15.43 L6.33,15.58 L6.26,15.75 L6.15,15.95 L6.00,16.19 L5.81,16.45 L5.61,16.74 L5.44,17.03 L5.31,17.29 L5.24,17.53 L5.23,17.73 L5.25,17.91 L5.30,18.07 L5.38,18.21 L5.47,18.34 L5.57,18.46 L5.68,18.57 L5.79,18.69 L5.90,18.80 L6.01,18.91 L6.13,19.02 L6.24,19.13 L6.36,19.23 L6.49,19.32 L6.63,19.40 L6.79,19.45 L6.97,19.47 L7.17,19.46 L7.41,19.39 L7.67,19.26 L7.96,19.09 L8.25,18.89 L8.51,18.70 L8.75,18.55 L8.95,18.44 L9.12,18.37 L9.27,18.34 L9.40,18.34 L9.52,18.35 L9.64,18.38 L9.75,18.41 L9.85,18.46 L9.95,18.51 L10.05,18.57 L10.15,18.65 L10.24,18.74 L10.32,18.87 L10.40,19.04 L10.46,19.26 L10.52,19.53 L10.58,19.86 L10.64,20.20 L10.72,20.53 L10.82,20.80 L10.94,21.01 L11.07,21.17 L11.21,21.28 L11.36,21.35 L11.51,21.41 L11.67,21.43 L11.83,21.44 L11.98,21.44 L12.14,21.45 L12.30,21.45 L12.46,21.45 L12.62,21.44 L12.77,21.44 L12.93,21.43 L13.09,21.41 L13.24,21.35 L13.39,21.28 L13.53,21.17 L13.66,21.01 L13.78,20.80 L13.88,20.53 L13.96,20.20 L14.02,19.86 L14.08,19.53 L14.14,19.26 L14.20,19.04 L14.28,18.87 L14.36,18.74 L14.45,18.65 L14.55,18.57 L14.65,18.51 L14.75,18.46 L14.85,18.41 L14.96,18.38 L15.08,18.35 L15.20,18.34 L15.33,18.34 L15.48,18.37 L15.65,18.44 L15.85,18.55 L16.09,18.70 L16.35,18.89 L16.64,19.09 L16.93,19.26 L17.19,19.39 L17.43,19.46 L17.63,19.47 L17.81,19.45 L17.97,19.40 L18.11,19.32 L18.24,19.23 L18.36,19.13 L18.47,19.02 L18.59,18.91 L18.70,18.80 L18.81,18.69 L18.92,18.57 L19.03,18.46 L19.13,18.34 L19.22,18.21 L19.30,18.07 L19.35,17.91 L19.37,17.73 L19.36,17.53 L19.29,17.29 L19.16,17.03 L18.99,16.74 L18.79,16.45 L18.60,16.19 L18.45,15.95 L18.34,15.75 L18.27,15.58 L18.24,15.43 L18.24,15.30 L18.25,15.18 L18.28,15.06 L18.31,14.95 L18.36,14.85 L18.41,14.75 L18.47,14.65 L18.55,14.55 L18.64,14.46 L18.77,14.38 L18.94,14.30 L19.16,14.24 L19.43,14.18 L19.76,14.12 L20.10,14.06 L20.43,13.98 L20.70,13.88 L20.91,13.76 L21.07,13.63 L21.18,13.49 L21.25,13.34 L21.31,13.19 L21.33,13.03 L21.34,12.87 L21.34,12.72 L21.35,12.56Z" fill="none" stroke="#d0d0d0" stroke-width="1.5" stroke-linejoin="round"/><circle cx="12.30" cy="12.40" r="3.25" fill="none" stroke="#d0d0d0" stroke-width="1.5"/></svg>
<svg style="left:56px;top:907px" width="23" height="23" viewBox="0 0 23 23"><rect x="0.5" y="0.5" width="22" height="22" rx="4" fill="#494b4e" stroke="#5f5f5f"/><path d="M11.5,6.5 L6.5,11.5 L11.5,16.5 M6.5,11.5 H17" fill="none" stroke="#d8d8d8" stroke-width="1.3"/></svg>
<svg style="left:84px;top:907px" width="23" height="23" viewBox="0 0 23 23"><rect x="0.5" y="0.5" width="22" height="22" rx="4" fill="#494b4e" stroke="#5f5f5f"/><path d="M11.5,6.5 L16.5,11.5 L11.5,16.5 M16.5,11.5 H6" fill="none" stroke="#d8d8d8" stroke-width="1.3"/></svg>
<svg style="left:825px;top:906px" width="23" height="23" viewBox="0 0 23 23"><circle cx="12.40" cy="12.40" r="8.90" fill="none" stroke="#d0d0d0" stroke-width="1.4"/><path d="M9.80,10.20 C9.80,7.20 15.20,7.20 15.20,10.00 C15.20,12.00 12.40,12.20 12.40,14.40" fill="none" stroke="#d0d0d0" stroke-width="1.4"/><circle cx="12.40" cy="16.80" r="1.00" fill="#d0d0d0"/></svg>
<svg style="left:851px;top:906px" width="23" height="23" viewBox="0 0 23 23"><path d="M21.35,12.40 L21.35,12.24 L21.34,12.08 L21.34,11.93 L21.33,11.77 L21.31,11.61 L21.25,11.46 L21.18,11.31 L21.07,11.17 L20.91,11.04 L20.70,10.92 L20.43,10.82 L20.10,10.74 L19.76,10.68 L19.43,10.62 L19.16,10.56 L18.94,10.50 L18.77,10.42 L18.64,10.34 L18.55,10.25 L18.47,10.15 L18.41,10.05 L18.36,9.95 L18.31,9.85 L18.28,9.74 L18.25,9.62 L18.24,9.50 L18.24,9.37 L18.27,9.22 L18.34,9.05 L18.45,8.85 L18.60,8.61 L18.79,8.35 L18.99,8.06 L19.16,7.77 L19.29,7.51 L19.36,7.27 L19.37,7.07 L19.35,6.89 L19.30,6.73 L19.22,6.59 L19.13,6.46 L19.03,6.34 L18.92,6.23 L18.81,6.11 L18.70,6.00 L18.59,5.89 L18.47,5.78 L18.36,5.67 L18.24,5.57 L18.11,5.48 L17.97,5.40 L17.81,5.35 L17.63,5.33 L17.43,5.34 L17.19,5.41 L16.93,5.54 L16.64,5.71 L16.35,5.91 L16.09,6.10 L15.85,6.25 L15.65,6.36 L15.48,6.43 L15.33,6.46 L15.20,6.46 L15.08,6.45 L14.96,6.42 L14.85,6.39 L14.75,6.34 L14.65,6.29 L14.55,6.23 L14.45,6.15 L14.36,6.06 L14.28,5.93 L14.20,5.76 L14.14,5.54 L14.08,5.27 L14.02,4.94 L13.96,4.60 L13.88,4.27 L13.78,4.00 L13.66,3.79 L13.53,3.63 L13.39,3.52 L13.24,3.45 L13.09,3.39 L12.93,3.37 L12.77,3.36 L12.62,3.36 L12.46,3.35 L12.30,3.35 L12.14,3.35 L11.98,3.36 L11.83,3.36 L11.67,3.37 L11.51,3.39 L11.36,3.45 L11.21,3.52 L11.07,3.63 L10.94,3.79 L10.82,4.00 L10.72,4.27 L10.64,4.60 L10.58,4.94 L10.52,5.27 L10.46,5.54 L10.40,5.76 L10.32,5.93 L10.24,6.06 L10.15,6.15 L10.05,6.23 L9.95,6.29 L9.85,6.34 L9.75,6.39 L9.64,6.42 L9.52,6.45 L9.40,6.46 L9.27,6.46 L9.12,6.43 L8.95,6.36 L8.75,6.25 L8.51,6.10 L8.25,5.91 L7.96,5.71 L7.67,5.54 L7.41,5.41 L7.17,5.34 L6.97,5.33 L6.79,5.35 L6.63,5.40 L6.49,5.48 L6.36,5.57 L6.24,5.67 L6.13,5.78 L6.01,5.89 L5.90,6.00 L5.79,6.11 L5.68,6.23 L5.57,6.34 L5.47,6.46 L5.38,6.59 L5.30,6.73 L5.25,6.89 L5.23,7.07 L5.24,7.27 L5.31,7.51 L5.44,7.77 L5.61,8.06 L5.81,8.35 L6.00,8.61 L6.15,8.85 L6.26,9.05 L6.33,9.22 L6.36,9.37 L6.36,9.50 L6.35,9.62 L6.32,9.74 L6.29,9.85 L6.24,9.95 L6.19,10.05 L6.13,10.15 L6.05,10.25 L5.96,10.34 L5.83,10.42 L5.66,10.50 L5.44,10.56 L5.17,10.62 L4.84,10.68 L4.50,10.74 L4.17,10.82 L3.90,10.92 L3.69,11.04 L3.53,11.17 L3.42,11.31 L3.35,11.46 L3.29,11.61 L3.27,11.77 L3.26,11.93 L3.26,12.08 L3.25,12.24 L3.25,12.40 L3.25,12.56 L3.26,12.72 L3.26,12.87 L3.27,13.03 L3.29,13.19 L3.35,13.34 L3.42,13.49 L3.53,13.63 L3.69,13.76 L3.90,13.88 L4.17,13.98 L4.50,14.06 L4.84,14.12 L5.17,14.18 L5.44,14.24 L5.66,14.30 L5.83,14.38 L5.96,14.46 L6.05,14.55 L6.13,14.65 L6.19,14.75 L6.24,14.85 L6.29,14.95 L6.32,15.06 L6.35,15.18 L6.36,15.30 L6.36,15.43 L6.33,15.58 L6.26,15.75 L6.15,15.95 L6.00,16.19 L5.81,16.45 L5.61,16.74 L5.44,17.03 L5.31,17.29 L5.24,17.53 L5.23,17.73 L5.25,17.91 L5.30,18.07 L5.38,18.21 L5.47,18.34 L5.57,18.46 L5.68,18.57 L5.79,18.69 L5.90,18.80 L6.01,18.91 L6.13,19.02 L6.24,19.13 L6.36,19.23 L6.49,19.32 L6.63,19.40 L6.79,19.45 L6.97,19.47 L7.17,19.46 L7.41,19.39 L7.67,19.26 L7.96,19.09 L8.25,18.89 L8.51,18.70 L8.75,18.55 L8.95,18.44 L9.12,18.37 L9.27,18.34 L9.40,18.34 L9.52,18.35 L9.64,18.38 L9.75,18.41 L9.85,18.46 L9.95,18.51 L10.05,18.57 L10.15,18.65 L10.24,18.74 L10.32,18.87 L10.40,19.04 L10.46,19.26 L10.52,19.53 L10.58,19.86 L10.64,20.20 L10.72,20.53 L10.82,20.80 L10.94,21.01 L11.07,21.17 L11.21,21.28 L11.36,21.35 L11.51,21.41 L11.67,21.43 L11.83,21.44 L11.98,21.44 L12.14,21.45 L12.30,21.45 L12.46,21.45 L12.62,21.44 L12.77,21.44 L12.93,21.43 L13.09,21.41 L13.24,21.35 L13.39,21.28 L13.53,21.17 L13.66,21.01 L13.78,20.80 L13.88,20.53 L13.96,20.20 L14.02,19.86 L14.08,19.53 L14.14,19.26 L14.20,19.04 L14.28,18.87 L14.36,18.74 L14.45,18.65 L14.55,18.57 L14.65,18.51 L14.75,18.46 L14.85,18.41 L14.96,18.38 L15.08,18.35 L15.20,18.34 L15.33,18.34 L15.48,18.37 L15.65,18.44 L15.85,18.55 L16.09,18.70 L16.35,18.89 L16.64,19.09 L16.93,19.26 L17.19,19.39 L17.43,19.46 L17.63,19.47 L17.81,19.45 L17.97,19.40 L18.11,19.32 L18.24,19.23 L18.36,19.13 L18.47,19.02 L18.59,18.91 L18.70,18.80 L18.81,18.69 L18.92,18.57 L19.03,18.46 L19.13,18.34 L19.22,18.21 L19.30,18.07 L19.35,17.91 L19.37,17.73 L19.36,17.53 L19.29,17.29 L19.16,17.03 L18.99,16.74 L18.79,16.45 L18.60,16.19 L18.45,15.95 L18.34,15.75 L18.27,15.58 L18.24,15.43 L18.24,15.30 L18.25,15.18 L18.28,15.06 L18.31,14.95 L18.36,14.85 L18.41,14.75 L18.47,14.65 L18.55,14.55 L18.64,14.46 L18.77,14.38 L18.94,14.30 L19.16,14.24 L19.43,14.18 L19.76,14.12 L20.10,14.06 L20.43,13.98 L20.70,13.88 L20.91,13.76 L21.07,13.63 L21.18,13.49 L21.25,13.34 L21.31,13.19 L21.33,13.03 L21.34,12.87 L21.34,12.72 L21.35,12.56Z" fill="none" stroke="#d0d0d0" stroke-width="1.5" stroke-linejoin="round"/><circle cx="12.30" cy="12.40" r="3.25" fill="none" stroke="#d0d0d0" stroke-width="1.5"/></svg>
<svg style="left:879px;top:907px" width="23" height="23" viewBox="0 0 23 23"><rect x="0.5" y="0.5" width="22" height="22" rx="4" fill="#494b4e" stroke="#5f5f5f"/><path d="M11.5,6.5 L6.5,11.5 L11.5,16.5 M6.5,11.5 H17" fill="none" stroke="#d8d8d8" stroke-width="1.3"/></svg>
<svg style="left:907px;top:907px" width="23" height="23" viewBox="0 0 23 23"><rect x="0.5" y="0.5" width="22" height="22" rx="4" fill="#494b4e" stroke="#5f5f5f"/><path d="M11.5,6.5 L16.5,11.5 L11.5,16.5 M16.5,11.5 H6" fill="none" stroke="#d8d8d8" stroke-width="1.3"/></svg>
<svg style="left:733px;top:136px" width="18" height="17" viewBox="0 0 18 17"><path d="M2.5,0 H15.5 L18,2.5 V14.5 L15.5,17 H2.5 L0,14.5 V2.5 Z" fill="#2a67a6"/><path d="M4,3.7 H13.8" stroke="#c5d3e6" stroke-width="1.5"/><path d="M4,7.6 H11 A2.4,2.4 0 0 1 11,12.4 H9.6" fill="none" stroke="#ffffff" stroke-width="1.5"/><path d="M11.2,10.6 L9.4,12.4 L11.2,14.2" fill="none" stroke="#ffffff" stroke-width="1.3"/><path d="M4,11.7 H7.2" stroke="#ffffff" stroke-width="1.5"/></svg>
<div class="a t" style="left:765px;top:138px;font-size:11.5px;line-height:11.5px;color:#b4b4b4;font-weight:normal;font-family:'Liberation Sans', sans-serif;letter-spacing:-0.5px;">\n</div>
<svg style="left:793px;top:139px" width="11" height="11" viewBox="0 0 11 11"><path d="M0.5,1.5 H10" stroke="#d0d0d0" stroke-width="1.3"/><path d="M0.5,5 H10" stroke="#9a9a9a" stroke-width="1.3"/><path d="M0.5,8.5 H10" stroke="#d0d0d0" stroke-width="1.3"/></svg>
<svg style="left:1557px;top:136px" width="18" height="17" viewBox="0 0 18 17"><path d="M2.5,0 H15.5 L18,2.5 V14.5 L15.5,17 H2.5 L0,14.5 V2.5 Z" fill="#2a67a6"/><path d="M4,3.7 H13.8" stroke="#c5d3e6" stroke-width="1.5"/><path d="M4,7.6 H11 A2.4,2.4 0 0 1 11,12.4 H9.6" fill="none" stroke="#ffffff" stroke-width="1.5"/><path d="M11.2,10.6 L9.4,12.4 L11.2,14.2" fill="none" stroke="#ffffff" stroke-width="1.3"/><path d="M4,11.7 H7.2" stroke="#ffffff" stroke-width="1.5"/></svg>
<div class="a t" style="left:1589px;top:138px;font-size:11.5px;line-height:11.5px;color:#b4b4b4;font-weight:normal;font-family:'Liberation Sans', sans-serif;letter-spacing:-0.5px;">\n</div>
<svg style="left:1617px;top:139px" width="11" height="11" viewBox="0 0 11 11"><path d="M0.5,1.5 H10" stroke="#d0d0d0" stroke-width="1.3"/><path d="M0.5,5 H10" stroke="#9a9a9a" stroke-width="1.3"/><path d="M0.5,8.5 H10" stroke="#d0d0d0" stroke-width="1.3"/></svg>
<svg style="left:1547px;top:100px" width="84" height="18" viewBox="0 0 84 18"><rect x="0" y="0" width="84" height="18" rx="3" fill="#48494a"/><path d="M2.5,0 H27 V18 H2.5 L0,15.5 V2.5 Z" fill="#2a67a6"/><path d="M27.5,0 V18 M55.5,0 V18" stroke="#3a3b3c" stroke-width="1"/><rect x="7.6" y="4.8" width="5" height="8.2" fill="#c9c3bb"/><rect x="14.6" y="4.8" width="5" height="8.2" fill="#c9c3bb"/><rect x="37" y="5" width="10" height="3.4" fill="#c8c8c8"/><rect x="37" y="9.6" width="10" height="3.4" fill="#c8c8c8"/><rect x="65" y="5" width="10" height="8" fill="#c8c8c8"/></svg>
<svg style="left:1752px;top:105px" width="48" height="18" viewBox="0 0 48 18"><path d="M3,0 H24 V18 H3 L0,15 V3 Z" fill="#4a4a4b"/><path d="M24,0 H45 L48,3 V15 L45,18 H24 Z" fill="#2a67a6"/><rect x="7" y="5" width="2" height="8" fill="#c8c8c8"/><rect x="10" y="5" width="7" height="8" fill="#c8c8c8"/><rect x="31" y="5" width="7" height="8" fill="#ffffff"/><rect x="39" y="5" width="2" height="8" fill="#ffffff"/></svg>
<svg style="left:1811px;top:106px" width="16" height="18" viewBox="0 0 16 18"><path d="M1,2 H14 M1,15 H14" stroke="#d0d0d0" stroke-width="1.8"/><path d="M5,7 L7.5,4.6 L10,7 Z M5,10 L7.5,12.4 L10,10 Z" fill="#d0d0d0"/></svg>
<svg style="left:1838px;top:106px" width="16" height="18" viewBox="0 0 16 18"><path d="M1,8.6 H14" stroke="#d0d0d0" stroke-width="1.8"/><path d="M5,1.4 H10 L7.5,3.8 Z M5,15.6 H10 L7.5,13.2 Z" fill="#d0d0d0"/></svg>
<svg style="left:1862px;top:104px" width="20" height="20" viewBox="0 0 20 20"><path d="M18.00,10.40 L18.00,10.27 L18.00,10.13 L17.99,10.00 L17.98,9.87 L17.95,9.74 L17.91,9.61 L17.84,9.49 L17.74,9.37 L17.60,9.26 L17.41,9.16 L17.16,9.09 L16.87,9.02 L16.57,8.98 L16.30,8.93 L16.08,8.88 L15.92,8.82 L15.79,8.75 L15.70,8.68 L15.63,8.60 L15.57,8.52 L15.53,8.43 L15.48,8.35 L15.45,8.26 L15.42,8.17 L15.39,8.07 L15.37,7.97 L15.37,7.87 L15.38,7.75 L15.42,7.62 L15.50,7.46 L15.61,7.27 L15.77,7.04 L15.95,6.80 L16.11,6.55 L16.23,6.32 L16.30,6.11 L16.32,5.94 L16.31,5.78 L16.27,5.65 L16.21,5.53 L16.14,5.41 L16.05,5.31 L15.96,5.22 L15.87,5.12 L15.77,5.03 L15.68,4.93 L15.58,4.84 L15.49,4.75 L15.39,4.66 L15.27,4.59 L15.15,4.53 L15.02,4.49 L14.86,4.48 L14.69,4.50 L14.48,4.57 L14.25,4.69 L14.00,4.85 L13.76,5.03 L13.53,5.19 L13.34,5.30 L13.18,5.38 L13.05,5.42 L12.93,5.43 L12.83,5.43 L12.73,5.41 L12.63,5.38 L12.54,5.35 L12.45,5.32 L12.37,5.27 L12.28,5.23 L12.20,5.17 L12.12,5.10 L12.05,5.01 L11.98,4.88 L11.92,4.72 L11.87,4.50 L11.82,4.23 L11.78,3.93 L11.71,3.64 L11.64,3.39 L11.54,3.20 L11.43,3.06 L11.31,2.96 L11.19,2.89 L11.06,2.85 L10.93,2.82 L10.80,2.81 L10.67,2.80 L10.53,2.80 L10.40,2.80 L10.27,2.80 L10.13,2.80 L10.00,2.81 L9.87,2.82 L9.74,2.85 L9.61,2.89 L9.49,2.96 L9.37,3.06 L9.26,3.20 L9.16,3.39 L9.09,3.64 L9.02,3.93 L8.98,4.23 L8.93,4.50 L8.88,4.72 L8.82,4.88 L8.75,5.01 L8.68,5.10 L8.60,5.17 L8.52,5.23 L8.43,5.27 L8.35,5.32 L8.26,5.35 L8.17,5.38 L8.07,5.41 L7.97,5.43 L7.87,5.43 L7.75,5.42 L7.62,5.38 L7.46,5.30 L7.27,5.19 L7.04,5.03 L6.80,4.85 L6.55,4.69 L6.32,4.57 L6.11,4.50 L5.94,4.48 L5.78,4.49 L5.65,4.53 L5.53,4.59 L5.41,4.66 L5.31,4.75 L5.22,4.84 L5.12,4.93 L5.03,5.03 L4.93,5.12 L4.84,5.22 L4.75,5.31 L4.66,5.41 L4.59,5.53 L4.53,5.65 L4.49,5.78 L4.48,5.94 L4.50,6.11 L4.57,6.32 L4.69,6.55 L4.85,6.80 L5.03,7.04 L5.19,7.27 L5.30,7.46 L5.38,7.62 L5.42,7.75 L5.43,7.87 L5.43,7.97 L5.41,8.07 L5.38,8.17 L5.35,8.26 L5.32,8.35 L5.27,8.43 L5.23,8.52 L5.17,8.60 L5.10,8.68 L5.01,8.75 L4.88,8.82 L4.72,8.88 L4.50,8.93 L4.23,8.98 L3.93,9.02 L3.64,9.09 L3.39,9.16 L3.20,9.26 L3.06,9.37 L2.96,9.49 L2.89,9.61 L2.85,9.74 L2.82,9.87 L2.81,10.00 L2.80,10.13 L2.80,10.27 L2.80,10.40 L2.80,10.53 L2.80,10.67 L2.81,10.80 L2.82,10.93 L2.85,11.06 L2.89,11.19 L2.96,11.31 L3.06,11.43 L3.20,11.54 L3.39,11.64 L3.64,11.71 L3.93,11.78 L4.23,11.82 L4.50,11.87 L4.72,11.92 L4.88,11.98 L5.01,12.05 L5.10,12.12 L5.17,12.20 L5.23,12.28 L5.27,12.37 L5.32,12.45 L5.35,12.54 L5.38,12.63 L5.41,12.73 L5.43,12.83 L5.43,12.93 L5.42,13.05 L5.38,13.18 L5.30,13.34 L5.19,13.53 L5.03,13.76 L4.85,14.00 L4.69,14.25 L4.57,14.48 L4.50,14.69 L4.48,14.86 L4.49,15.02 L4.53,15.15 L4.59,15.27 L4.66,15.39 L4.75,15.49 L4.84,15.58 L4.93,15.68 L5.03,15.77 L5.12,15.87 L5.22,15.96 L5.31,16.05 L5.41,16.14 L5.53,16.21 L5.65,16.27 L5.78,16.31 L5.94,16.32 L6.11,16.30 L6.32,16.23 L6.55,16.11 L6.80,15.95 L7.04,15.77 L7.27,15.61 L7.46,15.50 L7.62,15.42 L7.75,15.38 L7.87,15.37 L7.97,15.37 L8.07,15.39 L8.17,15.42 L8.26,15.45 L8.35,15.48 L8.43,15.53 L8.52,15.57 L8.60,15.63 L8.68,15.70 L8.75,15.79 L8.82,15.92 L8.88,16.08 L8.93,16.30 L8.98,16.57 L9.02,16.87 L9.09,17.16 L9.16,17.41 L9.26,17.60 L9.37,17.74 L9.49,17.84 L9.61,17.91 L9.74,17.95 L9.87,17.98 L10.00,17.99 L10.13,18.00 L10.27,18.00 L10.40,18.00 L10.53,18.00 L10.67,18.00 L10.80,17.99 L10.93,17.98 L11.06,17.95 L11.19,17.91 L11.31,17.84 L11.43,17.74 L11.54,17.60 L11.64,17.41 L11.71,17.16 L11.78,16.87 L11.82,16.57 L11.87,16.30 L11.92,16.08 L11.98,15.92 L12.05,15.79 L12.12,15.70 L12.20,15.63 L12.28,15.57 L12.37,15.53 L12.45,15.48 L12.54,15.45 L12.63,15.42 L12.73,15.39 L12.83,15.37 L12.93,15.37 L13.05,15.38 L13.18,15.42 L13.34,15.50 L13.53,15.61 L13.76,15.77 L14.00,15.95 L14.25,16.11 L14.48,16.23 L14.69,16.30 L14.86,16.32 L15.02,16.31 L15.15,16.27 L15.27,16.21 L15.39,16.14 L15.49,16.05 L15.58,15.96 L15.68,15.87 L15.77,15.77 L15.87,15.68 L15.96,15.58 L16.05,15.49 L16.14,15.39 L16.21,15.27 L16.27,15.15 L16.31,15.02 L16.32,14.86 L16.30,14.69 L16.23,14.48 L16.11,14.25 L15.95,14.00 L15.77,13.76 L15.61,13.53 L15.50,13.34 L15.42,13.18 L15.38,13.05 L15.37,12.93 L15.37,12.83 L15.39,12.73 L15.42,12.63 L15.45,12.54 L15.48,12.45 L15.53,12.37 L15.57,12.28 L15.63,12.20 L15.70,12.12 L15.79,12.05 L15.92,11.98 L16.08,11.92 L16.30,11.87 L16.57,11.82 L16.87,11.78 L17.16,11.71 L17.41,11.64 L17.60,11.54 L17.74,11.43 L17.84,11.31 L17.91,11.19 L17.95,11.06 L17.98,10.93 L17.99,10.80 L18.00,10.67 L18.00,10.53Z" fill="none" stroke="#d0d0d0" stroke-width="1.4" stroke-linejoin="round"/><circle cx="10.40" cy="10.40" r="2.60" fill="none" stroke="#d0d0d0" stroke-width="1.4"/></svg>
<svg style="left:1892px;top:107px" width="15" height="15" viewBox="0 0 15 15"><path d="M1.5,1.5 L13.5,13.5 M13.5,1.5 L1.5,13.5" stroke="#d8d8d8" stroke-width="1.5"/></svg>
<svg style="left:1895px;top:150px" width="12" height="8" viewBox="0 0 12 8"><path d="M1,1 L6,6 L11,1" fill="none" stroke="#c0c0c0" stroke-width="1.3"/></svg>
<svg style="left:1895px;top:189px" width="12" height="8" viewBox="0 0 12 8"><path d="M1,1 L6,6 L11,1" fill="none" stroke="#c0c0c0" stroke-width="1.3"/></svg>
<svg style="left:1895px;top:228px" width="12" height="8" viewBox="0 0 12 8"><path d="M1,1 L6,6 L11,1" fill="none" stroke="#c0c0c0" stroke-width="1.3"/></svg>
<svg style="left:1895px;top:267px" width="12" height="8" viewBox="0 0 12 8"><path d="M1,1 L6,6 L11,1" fill="none" stroke="#c0c0c0" stroke-width="1.3"/></svg>
<svg style="left:1895px;top:306px" width="12" height="8" viewBox="0 0 12 8"><path d="M1,1 L6,6 L11,1" fill="none" stroke="#c0c0c0" stroke-width="1.3"/></svg>
<svg style="left:1895px;top:345px" width="12" height="8" viewBox="0 0 12 8"><path d="M1,1 L6,6 L11,1" fill="none" stroke="#c0c0c0" stroke-width="1.3"/></svg>
</body></html>
